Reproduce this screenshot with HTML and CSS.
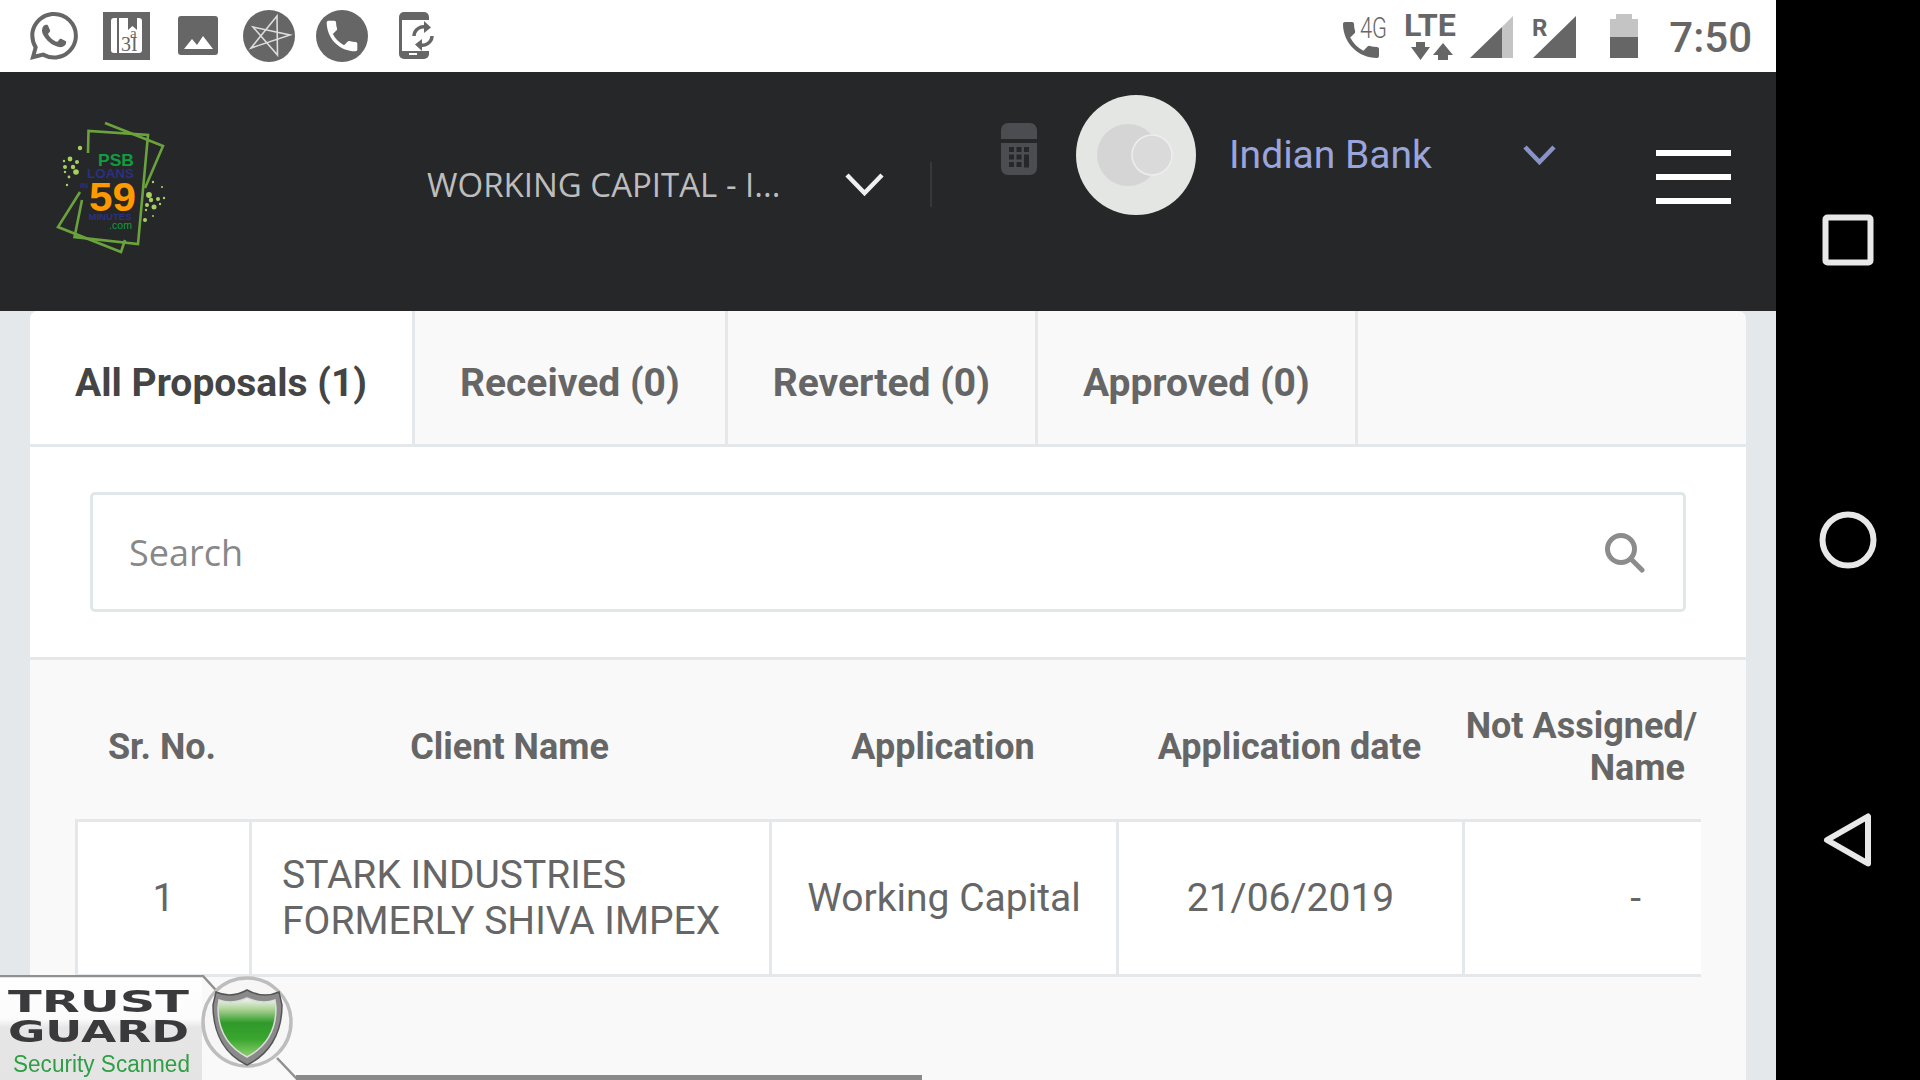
FILE: index.html
```html
<!DOCTYPE html>
<html lang="en">
<head>
<meta charset="utf-8">
<title>Proposals</title>
<link rel="stylesheet" href="styles.css">
</head>
<body>
<div class="screen">
  <div class="status">
    <div class="status-left">
      <svg class="cell" viewBox="0 0 72 72"><g transform="translate(12 12) scale(2)"><path class="ink" d="M17.472 14.382c-.297-.149-1.758-.867-2.03-.967-.273-.099-.471-.148-.67.15-.197.297-.767.966-.94 1.164-.173.199-.347.223-.644.075-.297-.15-1.255-.463-2.39-1.475-.883-.788-1.48-1.761-1.653-2.059-.173-.297-.018-.458.13-.606.134-.133.298-.347.446-.52.149-.174.198-.298.298-.497.099-.198.05-.371-.025-.52-.075-.149-.669-1.612-.916-2.207-.242-.579-.487-.5-.669-.51-.173-.008-.371-.01-.57-.01-.198 0-.52.074-.792.372-.272.297-1.04 1.016-1.04 2.479 0 1.462 1.065 2.875 1.213 3.074.149.198 2.096 3.2 5.077 4.487.709.306 1.262.489 1.694.625.712.227 1.36.195 1.871.118.571-.085 1.758-.719 2.006-1.413.248-.694.248-1.289.173-1.413-.074-.124-.272-.198-.57-.347m-5.421 7.403h-.004a9.87 9.87 0 01-5.031-1.378l-.361-.214-3.741.982.998-3.648-.235-.374a9.86 9.86 0 01-1.51-5.26c.001-5.45 4.436-9.884 9.888-9.884 2.64 0 5.122 1.03 6.988 2.898a9.825 9.825 0 012.893 6.994c-.003 5.45-4.437 9.884-9.885 9.884m8.413-18.297A11.815 11.815 0 0012.05 0C5.495 0 .16 5.335.157 11.892c0 2.096.547 4.142 1.588 5.945L.057 24l6.305-1.654a11.882 11.882 0 005.683 1.448h.005c6.554 0 11.89-5.335 11.893-11.893a11.821 11.821 0 00-3.48-8.413z"/></g></svg>
      <svg class="cell" viewBox="0 0 72 72">
        <rect class="ink" x="13" y="12" width="47" height="48"/>
        <rect class="paper" x="21" y="18" width="31" height="35" rx="3"/>
        <rect class="ink" x="27" y="18" width="2" height="35"/>
        <polygon class="ink" points="38,18 47,18 47,30 42.5,26 38,30"/>
        <text class="book-a" x="40" y="38">a</text>
        <text class="book-b" x="31" y="51">3I</text>
      </svg>
      <svg class="cell" viewBox="0 0 72 72">
        <rect class="ink" x="16" y="16" width="40" height="39" rx="3"/>
        <polygon class="paper" points="22,49 30,39 35,45 41,36 51,49"/>
      </svg>
      <svg class="cell" viewBox="0 0 72 72">
        <circle class="ink" cx="35" cy="36" r="26"/>
        <polygon class="star" points="43,16 43.5,55 19,27 56,35 17,48"/>
      </svg>
      <svg class="cell" viewBox="0 0 72 72">
        <circle class="ink" cx="36" cy="36" r="26"/>
        <path class="paper" transform="translate(15.6 15.6) scale(1.7)" d="M6.62 10.79c1.44 2.83 3.76 5.14 6.59 6.59l2.2-2.2c.27-.27.67-.36 1.02-.24 1.12.37 2.33.57 3.57.57.55 0 1 .45 1 1V20c0 .55-.45 1-1 1-9.39 0-17-7.61-17-17 0-.55.45-1 1-1h3.5c.55 0 1 .45 1 1 0 1.25.2 2.45.57 3.57.11.35.03.74-.25 1.02l-2.2 2.2z"/>
      </svg>
      <svg class="cell" viewBox="0 0 72 72">
        <rect class="ink" x="21" y="12" width="30" height="47" rx="5"/>
        <rect class="paper" x="24" y="20" width="27" height="31"/>
        <rect class="paper" x="31" y="53" width="8" height="2"/>
        <circle class="halo" cx="45" cy="36" r="13"/>
        <path class="sync" d="M36 36a9.500 9.500 0 0 1 13-8.500M54 36a9.500 9.500 0 0 1-13 8.500"/>
        <polygon class="ink" points="46,21 53,27.500 46,33"/>
        <polygon class="ink" points="44,39 37,44.500 44,51"/>
      </svg>
    </div>
    <div class="status-right">
      <svg class="status-icons" viewBox="0 0 304 72">
        <path class="ink" transform="translate(-3 16) scale(2)" d="M6.62 10.79c1.44 2.83 3.76 5.14 6.59 6.59l2.2-2.2c.27-.27.67-.36 1.02-.24 1.12.37 2.33.57 3.57.57.55 0 1 .45 1 1V20c0 .55-.45 1-1 1-9.39 0-17-7.61-17-17 0-.55.45-1 1-1h3.5c.55 0 1 .45 1 1 0 1.25.2 2.45.57 3.57.11.35.03.74-.25 1.02l-2.2 2.2z"/>
        <text class="s-4g" x="20" y="38" textLength="27" lengthAdjust="spacingAndGlyphs">4G</text>
        <text class="s-lte" x="64" y="36" textLength="52" lengthAdjust="spacingAndGlyphs">LTE</text>
        <polygon class="ink" points="76,42 85,42 85,47 90,47 80.500,60 71,47 76,47"/>
        <polygon class="ink" points="103,43 113,55 108,55 108,60 98,60 98,55 93,55"/>
        <polygon class="ink-light" points="162,27 173,16 173,58 162,58"/>
        <polygon class="ink" points="130,58 162,27 162,58"/>
        <text class="s-r" x="192" y="36">R</text>
        <polygon class="ink" points="193,58 236,16 236,58"/>
        <polygon class="ink-light" points="276,14 292,14 292,19 298,19 298,37 270,37 270,19 276,19"/>
        <rect class="ink" x="270" y="37" width="28" height="21"/>
      </svg>
      <span class="clock">7:50</span>
    </div>
  </div>

  <header class="topbar">
    <svg class="logo" viewBox="0 0 170 170">
      <g class="logo-frame">
        <path d="M75 23 133 46 115 88M50 92 28 127 91 152 95 140"/>
        <path d="M58 53 58.500 31 118 35 108 144 44.500 137 52 100"/>
      </g>
      <text class="l-psb" x="68" y="66" textLength="36" lengthAdjust="spacingAndGlyphs">PSB</text>
      <text class="l-loans" x="57" y="78" textLength="47" lengthAdjust="spacingAndGlyphs">LOANS</text>
      <text class="l-in" x="50" y="88" textLength="8" lengthAdjust="spacingAndGlyphs">IN</text>
      <text class="l-59" x="59" y="111" textLength="47" lengthAdjust="spacingAndGlyphs">59</text>
      <text class="l-min" x="58.500" y="120" textLength="43" lengthAdjust="spacingAndGlyphs">MINUTES</text>
      <text class="l-com" x="79" y="129" textLength="23" lengthAdjust="spacingAndGlyphs">.com</text>
      <g class="logo-dots">
        <circle cx="50" cy="48" r="2.200"/><circle cx="40" cy="59" r="2.400"/><circle cx="47" cy="62" r="2"/><circle cx="35" cy="67" r="2"/><circle cx="43" cy="67" r="2.200"/><circle cx="46" cy="72" r="2.800"/><circle cx="35" cy="72" r="1.200"/><circle cx="39" cy="77" r="1.400"/><circle cx="37" cy="85" r="1.200"/><circle cx="34" cy="61" r="1.200"/>
        <circle cx="119" cy="95" r="2.900"/><circle cx="121" cy="100" r="2.200"/><circle cx="128" cy="99" r="2"/><circle cx="124" cy="107" r="2.500"/><circle cx="117" cy="105" r="2"/><circle cx="116" cy="110" r="1.200"/><circle cx="115" cy="120" r="2"/><circle cx="123" cy="82" r="1.200"/><circle cx="132" cy="87" r="1.100"/><circle cx="134" cy="98" r="1.200"/><circle cx="130" cy="104" r="1.200"/><circle cx="123" cy="116" r="1"/>
      </g>
    </svg>
    <div class="product">WORKING CAPITAL - I...</div>
    <svg class="chev-white" viewBox="0 0 39 27"><path d="M2 4 19.500 22 37 4"/></svg>
    <div class="divider"></div>
    <svg class="calc" viewBox="0 0 36 52">
      <path class="calc-body" d="M7 0H29a7 7 0 0 1 7 7V16H0V7a7 7 0 0 1 7-7ZM0 20H36V45a7 7 0 0 1-7 7H7a7 7 0 0 1-7-7Z"/>
      <g class="calc-keys">
        <rect x="8" y="24" width="5" height="5"/><rect x="15.500" y="24" width="5" height="5"/><rect x="23" y="24" width="5" height="5"/>
        <rect x="8" y="31.500" width="5" height="5"/><rect x="15.500" y="31.500" width="5" height="5"/><rect x="23" y="31.500" width="5" height="13"/>
        <rect x="8" y="39" width="5" height="5"/><rect x="15.500" y="39" width="5" height="5"/>
      </g>
    </svg>
    <svg class="avatar" viewBox="0 0 120 120">
      <circle class="av-1" cx="60" cy="60" r="60"/>
      <circle class="av-2" cx="52" cy="60" r="31"/>
      <circle class="av-3" cx="76" cy="60" r="20"/>
    </svg>
    <div class="bank">Indian Bank</div>
    <svg class="chev-bank" viewBox="0 0 33 20"><path d="M2 2 16.500 17 31 2"/></svg>
    <div class="burger"><span></span><span></span><span></span></div>
  </header>

  <main class="page">
    <section class="card">
      <nav class="tabs">
        <div class="tab active">All Proposals (1)</div>
        <div class="tab">Received (0)</div>
        <div class="tab">Reverted (0)</div>
        <div class="tab">Approved (0)</div>
      </nav>
      <div class="search-panel">
        <div class="search">
          <input class="search-input" type="text" placeholder="Search">
          <svg class="search-icon" viewBox="0 0 40 40"><circle cx="16" cy="16" r="13.500"/><path d="M26 26 37 37"/></svg>
        </div>
      </div>
      <div class="table-wrap">
        <table class="grid">
          <thead>
            <tr>
              <th class="c1">Sr. No.</th>
              <th class="c2">Client Name</th>
              <th class="c3">Application</th>
              <th class="c4">Application date</th>
              <th class="c5">Not Assigned/<br><span class="name-line">Name</span></th>
            </tr>
          </thead>
          <tbody>
            <tr>
              <td class="c1">1</td>
              <td class="c2 left">STARK INDUSTRIES<br>FORMERLY SHIVA IMPEX</td>
              <td class="c3">Working Capital</td>
              <td class="c4">21/06/2019</td>
              <td class="c5 dash">-</td>
            </tr>
          </tbody>
        </table>
      </div>
    </section>
    <svg class="badge" viewBox="0 0 300 105">
      <defs>
        <linearGradient id="panel" x1="0" y1="0" x2="0" y2="1"><stop offset="0" stop-color="#ffffff"/><stop offset=".42" stop-color="#fbfbfb"/><stop offset=".5" stop-color="#e6e6e6"/><stop offset="1" stop-color="#e4e4e4"/></linearGradient>
        <linearGradient id="shield" x1="0" y1="0" x2="0" y2="1"><stop offset="0" stop-color="#f4f6f2"/><stop offset=".2" stop-color="#a9d192"/><stop offset=".42" stop-color="#2f9a2a"/><stop offset=".7" stop-color="#3aa62f"/><stop offset="1" stop-color="#8fd070"/></linearGradient>
      </defs>
      <polygon class="b-panel" points="0,0 202,0 202,105 0,105"/>
      <path class="b-line" d="M0 1H203L224 24M277 83 298 105"/>
      <circle class="b-ring" cx="247" cy="47" r="44"/>
      <path class="b-shield-out" d="M247 15C256 20 268 22 279 17 L282 30C282 60 268 80 247 90 226 80 213 60 213 30L216 17C227 22 238 20 247 15Z"/>
      <path class="b-shield-in" d="M247 23C256 27 265 29 275 25 L276 33C276 57 264 73 247 82 230 73 218 57 218 33L219 25C229 29 238 27 247 23Z"/>
      <text class="b-title" x="8" y="37" textLength="181" lengthAdjust="spacingAndGlyphs">TRUST</text>
      <text class="b-title" x="8" y="67" textLength="181" lengthAdjust="spacingAndGlyphs">GUARD</text>
      <text class="b-sub" x="13" y="97" textLength="177" lengthAdjust="spacingAndGlyphs">Security Scanned</text>
    </svg>
    <div class="scrollbar"></div>
  </main>
</div>
<aside class="navbar">
  <svg class="nav-icon" viewBox="0 0 60 60"><rect x="7.500" y="7.500" width="45" height="45" rx="2"/></svg>
  <svg class="nav-icon" viewBox="0 0 60 60"><circle cx="30" cy="30" r="25.500"/></svg>
  <svg class="nav-icon" viewBox="0 0 60 60"><path d="M9 30 50 6.500V53.500Z"/></svg>
</aside>
</body>
</html>
```
FILE: styles.css
```css
* { box-sizing: border-box; }
html, body { margin: 0; height: 100%; }
body {
  display: flex;
  width: 1920px;
  height: 1080px;
  overflow: hidden;
  background: #000;
  font-family: Roboto, "Liberation Sans", sans-serif;
}
.screen { width: 1776px; height: 1080px; display: flex; flex-direction: column; }

/* status bar */
.status { height: 72px; background: #fff; display: flex; justify-content: space-between; padding: 0 24px 0 18px; flex: none; }
.status-left { display: flex; }
.status-right { display: flex; align-items: center; }
.cell { width: 72px; height: 72px; display: block; }
.ink { fill: #666; }
.ink-light { fill: #c4c4c4; }
.paper { fill: #fff; }
.halo { fill: #fff; }
.star { fill: none; stroke: #dcdcdc; stroke-width: 1.6; }
.sync { fill: none; stroke: #666; stroke-width: 3.500; }
.book-a { font: 15px "Liberation Serif", serif; fill: #666; }
.book-b { font: 20px "Liberation Serif", serif; fill: #666; }
.status-icons { width: 304px; height: 72px; display: block; }
.s-4g { font: 300 29px Roboto, sans-serif; fill: #666; }
.s-lte { font: 700 31px Roboto, sans-serif; fill: #666; }
.s-r { font: 700 24px Roboto, sans-serif; fill: #666; }
.clock { margin-left: 25px; padding-top: 3px; font-size: 42px; font-weight: 500; color: #666; line-height: 72px; }

/* top bar */
.topbar { height: 239px; background: #262729; display: flex; align-items: flex-start; flex: none; }
.logo { width: 170px; height: 170px; margin: 28px 0 0 30px; flex: none; }
.logo-frame path { fill: none; stroke: #6aa33c; stroke-width: 2.600; }
.logo-dots circle { fill: #a6d160; }
.l-psb { font: 700 17px "Liberation Sans", sans-serif; fill: #0f9d3f; }
.l-loans { font: 700 12.500px "Liberation Sans", sans-serif; fill: #2b3080; }
.l-in { font: 700 7px "Liberation Sans", sans-serif; fill: #2b3080; }
.l-59 { font: 700 40px "Liberation Sans", sans-serif; fill: #ff9900; }
.l-min { font: 700 9px "Liberation Sans", sans-serif; fill: #2b3080; }
.l-com { font: 400 10px "Liberation Sans", sans-serif; fill: #0f9d3f; }
.product {
  margin: 91px 0 0 227px;
  width: 353px;
  flex: none;
  font: 400 33px/44px "Open Sans", sans-serif;
  color: #bdbdbd;
  white-space: nowrap;
}
.chev-white { width: 39px; height: 27px; margin: 99px 0 0 65px; flex: none; }
.chev-white path { fill: none; stroke: #f0f0f0; stroke-width: 4.500; }
.divider { width: 2px; height: 45px; margin: 90px 0 0 46px; background: #37383b; flex: none; }
.calc { width: 36px; height: 52px; margin: 51px 0 0 69px; flex: none; }
.calc-body { fill: #4c4d50; }
.calc-keys rect { fill: #262729; }
.avatar { width: 120px; height: 120px; margin: 23px 0 0 39px; flex: none; }
.av-1 { fill: #e4e6e3; }
.av-2 { fill: #d5d5d5; }
.av-3 { fill: #dadada; stroke: #eeeeee; stroke-width: 1.500; }
.bank { width: 294px; margin: 61px 0 0 33px; flex: none; font: 400 39px/44px Roboto, sans-serif; color: #9aa5dc; white-space: nowrap; }
.chev-bank { width: 33px; height: 20px; margin: 73px 0 0 0; flex: none; }
.chev-bank path { fill: none; stroke: #8a93c8; stroke-width: 4.500; }
.burger { width: 75px; margin: 78px 0 0 100px; display: flex; flex-direction: column; gap: 18px; flex: none; }
.burger span { height: 6px; background: #fff; display: block; }

/* page */
.page { flex: 1; position: relative; background: #e4e8eb; padding: 0 30px; overflow: hidden; }
.card { background: #f9f9f9; height: 100%; border-radius: 8px 8px 0 0; overflow: hidden; }
.tabs { height: 136px; display: flex; border-bottom: 3px solid #e4e8eb; }
.tab {
  padding: 10px 45px 0;
  border-right: 3px solid #e4e8eb;
  display: flex;
  align-items: center;
  font-size: 39px;
  font-weight: 700;
  color: #666;
  white-space: nowrap;
}
.tab.active { background: #fff; color: #444; }
.search-panel { background: #fff; padding: 45px 60px; border-bottom: 3px solid #e4e8eb; height: 213px; }
.search { position: relative; height: 120px; border: 3px solid #e0e7e8; border-radius: 5px; display: flex; background: #fff; }
.search-input { flex: 1; border: 0; outline: 0; background: transparent; padding: 0 36px; font: 400 36px "Open Sans", sans-serif; color: #555; }
.search-input::placeholder { color: #888; opacity: 1; }
.search-icon { position: absolute; right: 38px; top: 38px; width: 40px; height: 40px; }
.search-icon circle, .search-icon path { fill: none; stroke: #8c8c8c; stroke-width: 5; stroke-linecap: round; }
.table-wrap { padding: 0 0 0 45px; }
.grid { width: 1626px; table-layout: fixed; border-collapse: separate; border-spacing: 0; }
.grid th { height: 159px; padding: 14px 5px 0 0; font-size: 36px; line-height: 42px; font-weight: 700; color: #666; text-align: center; vertical-align: middle; }
.grid th.c1 { padding-right: 3px; }
.grid td { height: 158px; padding: 0; background: #fff; font-size: 39px; line-height: 46px; font-weight: 400; color: #666; text-align: center; vertical-align: middle; border-top: 3px solid #e4e8eb; border-bottom: 3px solid #e4e8eb; border-right: 3px solid #e4e8eb; }
.grid td:first-child { border-left: 3px solid #e4e8eb; }
.grid td:last-child { border-right: 0; }
.c1 { width: 177px; }
.c2 { width: 520px; }
.c3 { width: 347px; }
.c4 { width: 346px; }
.c5 { width: 236px; }
.grid td.left { text-align: left; padding-left: 30px; }
.grid th.c5 { text-align: right; padding-right: 4px; }
.name-line { padding-right: 12px; }
.grid td.dash { text-align: right; padding-right: 60px; }

/* overlays */
.badge { position: absolute; left: 0; top: 664px; width: 300px; height: 105px; filter: blur(.5px); }
.b-panel { fill: url(#panel); }
.b-line { fill: none; stroke: #909090; stroke-width: 2.500; }
.b-ring { fill: #f6f6f6; stroke: #bdbdbd; stroke-width: 3.500; }
.b-shield-out { fill: #8a8a8a; stroke: #555; stroke-width: 1.500; }
.b-shield-in { fill: url(#shield); stroke: #dddddd; stroke-width: 1.500; }
.b-title { font: 700 31px "DejaVu Sans", sans-serif; fill: #3a3a3c; }
.b-sub { font: 400 23px "Liberation Sans", sans-serif; fill: #2f9e44; }
.scrollbar { position: absolute; left: 296px; top: 764px; width: 626px; height: 5px; background: #8a8a8a; }

/* android nav */
.navbar { width: 144px; height: 1080px; position: relative; background: #000; flex: none; }
.nav-icon { position: absolute; left: 42px; width: 60px; height: 60px; }
.nav-icon:nth-child(1) { top: 210px; }
.nav-icon:nth-child(2) { top: 510px; }
.nav-icon:nth-child(3) { top: 810px; }
.nav-icon rect, .nav-icon circle, .nav-icon path { fill: none; stroke: #e8e8e8; stroke-width: 6; stroke-linejoin: round; }
```
